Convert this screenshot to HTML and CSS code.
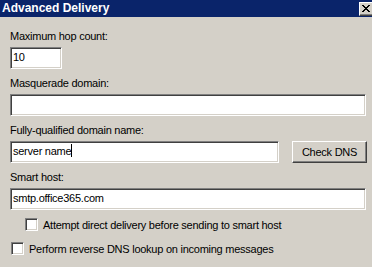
FILE: index.html
```html
<!DOCTYPE html>
<html lang="en">
<head>
  <meta charset="UTF-8">
  <title>Advanced Delivery</title>
  <link rel="stylesheet" href="styles.css">
</head>
<body>
<div class="janela">
  <div class="barra-titulo">
    <span class="titulo">Advanced Delivery</span>
    <span class="fechar">
      <svg width="8" height="7" viewBox="0 0 8 7" shape-rendering="crispEdges">
        <rect x="0" y="0" width="2" height="1"/><rect x="6" y="0" width="2" height="1"/>
        <rect x="1" y="1" width="2" height="1"/><rect x="5" y="1" width="2" height="1"/>
        <rect x="2" y="2" width="4" height="1"/>
        <rect x="3" y="3" width="2" height="1"/>
        <rect x="2" y="4" width="4" height="1"/>
        <rect x="1" y="5" width="2" height="1"/><rect x="5" y="5" width="2" height="1"/>
        <rect x="0" y="6" width="2" height="1"/><rect x="6" y="6" width="2" height="1"/>
      </svg>
    </span>
  </div>

  <div class="conteudo">
    <div class="campo">
      <label class="rotulo">Maximum hop count:</label>
      <div class="caixa caixa-hop">10</div>
    </div>

    <div class="campo">
      <label class="rotulo">Masquerade domain:</label>
      <div class="caixa caixa-larga"></div>
    </div>

    <div class="campo">
      <label class="rotulo">Fully-qualified domain name:</label>
      <div class="linha">
        <div class="caixa caixa-fqdn">server name<span class="cursor"></span></div>
        <button class="botao">Check DNS</button>
      </div>
    </div>

    <div class="campo">
      <label class="rotulo">Smart host:</label>
      <div class="caixa caixa-larga">smtp.office365.com</div>
    </div>

    <div class="opcoes">
      <div class="opcao recuada"><span class="marcador"></span>Attempt direct delivery before sending to smart host</div>
      <div class="opcao"><span class="marcador"></span>Perform reverse DNS lookup on incoming messages</div>
    </div>
  </div>
</div>
</body>
</html>
```

FILE: styles.css
```css
* {
  box-sizing: border-box;
}
body {
  margin: 0;
  background: #d4d0c8;
  font-family: "Liberation Sans", Arial, sans-serif;
  font-size: 11px;
  letter-spacing: -0.25px;
  color: #000;
  overflow: hidden;
}
.janela {
  width: 375px;
}
.barra-titulo {
  height: 17px;
  background: #0a246a;
  display: flex;
  justify-content: space-between;
  align-items: flex-start;
}
.titulo {
  color: white;
  font-weight: bold;
  font-size: 12px;
  letter-spacing: 0;
  line-height: 16px;
  padding-left: 2px;
}
.fechar {
  margin-top: 2px;
  width: 16px;
  height: 14px;
  background: #d4d0c8;
  border: 1px solid;
  border-color: #fff #404040 #404040 #fff;
  box-shadow: inset -1px -1px #808080;
  padding: 2px 0 0 2px;
}
.fechar svg {
  display: block;
  fill: #000;
}
.conteudo {
  padding: 13px 0 0 10px;
}
.campo {
  margin-bottom: 8px;
}
.rotulo {
  display: block;
  line-height: 13px;
  margin-bottom: 4px;
}
.caixa {
  height: 22px;
  background: white;
  border: 1px solid;
  border-color: #808080 #fff #fff #808080;
  box-shadow: inset 1px 1px #404040, inset -1px -1px #d4d0c8;
  padding: 0 2px;
  line-height: 19px;
  white-space: nowrap;
}
.caixa-hop {
  width: 52px;
}
.caixa-larga {
  width: 356px;
}
.caixa-fqdn {
  width: 269px;
}
.cursor {
  display: inline-block;
  width: 1px;
  height: 13px;
  background: #000;
  vertical-align: -2px;
}
.linha {
  display: flex;
  gap: 13px;
}
.botao {
  width: 75px;
  height: 22px;
  padding: 0;
  background: #d4d0c8;
  border: 1px solid;
  border-color: #fff #404040 #404040 #fff;
  box-shadow: inset -1px -1px #808080;
  font: inherit;
  letter-spacing: inherit;
  color: #000;
}
.opcoes {
  margin-top: 5px;
}
.opcao {
  display: flex;
  align-items: center;
  gap: 5px;
  height: 13px;
  padding-left: 1px;
  margin-bottom: 11px;
}
.opcao.recuada {
  padding-left: 15px;
}
.marcador {
  width: 13px;
  height: 13px;
  flex: none;
  background: white;
  border: 1px solid;
  border-color: #808080 #fff #fff #808080;
  box-shadow: inset 1px 1px #404040, inset -1px -1px #d4d0c8;
}
```
